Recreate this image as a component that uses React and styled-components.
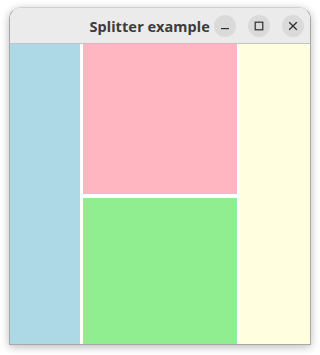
import React from "react";
import styled, { createGlobalStyle } from "styled-components";

const GlobalStyle = createGlobalStyle`
  html, body {
    margin: 0;
    padding: 0;
    background: #ffffff;
    font-family: "Noto Sans", "DejaVu Sans", sans-serif;
  }
`;

const Page = styled.div`
  width: 320px;
  height: 355px;
  padding: 7px 0 0 9px;
  box-sizing: border-box;
`;

const Window = styled.div`
  width: 302px;
  height: 338px;
  box-sizing: border-box;
  border: 1px solid #a9a9a9;
  border-top-color: #d0d0d0;
  border-radius: 12px 12px 0 0;
  overflow: hidden;
  display: flex;
  flex-direction: column;
  box-shadow: 0 2px 8px rgba(0, 0, 0, 0.28);
`;

const TitleBar = styled.div`
  height: 36px;
  flex-shrink: 0;
  background: #ebebeb;
  border-bottom: 1px solid #c4c4c4;
  display: flex;
  align-items: center;
  justify-content: flex-end;
  padding-right: 6px;
  box-sizing: border-box;
`;

const Title = styled.div`
  font-family: "Noto Sans", "DejaVu Sans", sans-serif;
  font-weight: 700;
  font-size: 14.5px;
  color: #3d3d3d;
  margin-right: 4px;
  letter-spacing: 0.1px;
`;

const Controls = styled.div`
  display: flex;
  gap: 12px;
`;

const WinButton = styled.button`
  width: 22px;
  height: 22px;
  border-radius: 50%;
  border: none;
  padding: 0;
  background: #dadada;
  display: flex;
  align-items: center;
  justify-content: center;
  color: #2e2e2e;
`;

const Content = styled.div`
  flex: 1;
  display: grid;
  grid-template-columns: 70px 154px 70px;
  column-gap: 3px;
  background: #ffffff;
`;

const Pane = styled.div`
  background: ${(p) => p.color};
`;

const MiddleColumn = styled.div`
  display: grid;
  grid-template-rows: 150px 1fr;
  row-gap: 4px;
`;

const App = () => {
  return (
    <>
      <GlobalStyle />
      <Page>
        <Window>
          <TitleBar>
            <Title>Splitter example</Title>
            <Controls>
              <WinButton aria-label="minimize">
                <svg width="10" height="10" viewBox="0 0 10 10">
                  <rect x="1" y="7" width="8" height="1.2" fill="currentColor" />
                </svg>
              </WinButton>
              <WinButton aria-label="maximize">
                <svg width="10" height="10" viewBox="0 0 10 10">
                  <rect x="1.2" y="1.2" width="7.6" height="7.6" fill="none" stroke="currentColor" strokeWidth="1.2" />
                </svg>
              </WinButton>
              <WinButton aria-label="close">
                <svg width="10" height="10" viewBox="0 0 10 10">
                  <path d="M1.2 1.2 L8.8 8.8 M8.8 1.2 L1.2 8.8" stroke="currentColor" strokeWidth="1.3" />
                </svg>
              </WinButton>
            </Controls>
          </TitleBar>
          <Content>
            <Pane color="#add8e6" />
            <MiddleColumn>
              <Pane color="#ffb6c1" />
              <Pane color="#90ee90" />
            </MiddleColumn>
            <Pane color="#ffffe0" />
          </Content>
        </Window>
      </Page>
    </>
  );
};

export default App;
